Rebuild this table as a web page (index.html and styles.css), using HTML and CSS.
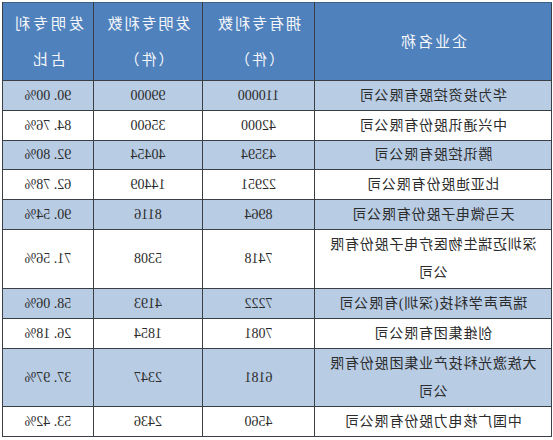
FILE: index.html
```html
<!DOCTYPE html>
<html lang="zh">
<head>
<meta charset="utf-8">
<title>专利统计</title>
<link rel="stylesheet" href="styles.css">
</head>
<body>
<div class="page">
  <table class="patents">
    <colgroup>
      <col class="c-name">
      <col class="c-own">
      <col class="c-inv">
      <col class="c-ratio">
    </colgroup>
    <thead>
      <tr>
        <th class="h-name">企业名称</th>
        <th>拥有专利数<br>（件）</th>
        <th>发明专利数<br>（件）</th>
        <th class="h-ratio">发明专利<br>占比</th>
      </tr>
    </thead>
    <tbody>
      <tr class="alt"><td class="name">华为投资控股有限公司</td><td>110000</td><td>99000</td><td>90. 00%</td></tr>
      <tr><td class="name">中兴通讯股份有限公司</td><td>42000</td><td>35600</td><td>84. 76%</td></tr>
      <tr class="alt r29"><td class="name">腾讯控股有限公司</td><td>43594</td><td>40454</td><td>92. 80%</td></tr>
      <tr><td class="name">比亚迪股份有限公司</td><td>22951</td><td>14409</td><td>62. 78%</td></tr>
      <tr class="alt"><td class="name">天马微电子股份有限公司</td><td>8964</td><td>8116</td><td>90. 54%</td></tr>
      <tr class="tall"><td class="name">深圳迈瑞生物医疗电子股份有限公司</td><td>7418</td><td>5308</td><td>71. 56%</td></tr>
      <tr class="alt"><td class="name">瑞声声学科技(深圳)有限公司</td><td>7222</td><td>4193</td><td>58. 06%</td></tr>
      <tr><td class="name">创维集团有限公司</td><td>7081</td><td>1854</td><td>26. 18%</td></tr>
      <tr class="alt tall2"><td class="name">大族激光科技产业集团股份有限公司</td><td>6181</td><td>2347</td><td>37. 97%</td></tr>
      <tr><td class="name">中国广核电力股份有限公司</td><td>4560</td><td>2436</td><td>53. 42%</td></tr>
    </tbody>
  </table>
</div>
</body>
</html>
```

FILE: styles.css
```css
html, body {
  margin: 0;
  padding: 0;
  background: #ffffff;
}

.page {
  width: 553px;
  height: 440px;
  padding-top: 2px;
  box-sizing: border-box;
  transform: scaleX(-1);
  overflow: hidden;
}

.patents {
  margin-left: 1px;
  width: 549px;
  table-layout: fixed;
  border-collapse: collapse;
  font-family: "Liberation Serif", "Noto Sans CJK SC", serif;
  font-size: 14px;
  color: #2b2b2b;
}

.c-name { width: 237px; }
.c-own { width: 112px; }
.c-inv { width: 109px; }
.c-ratio { width: 91px; }

.patents th,
.patents td {
  border: 1px solid #3a3f46;
  padding: 0 8px;
  text-align: center;
  vertical-align: middle;
}

.patents thead th {
  background: #4f81bd;
  color: #f4f6fa;
  font-weight: normal;
  font-size: 15px;
  letter-spacing: 2px;
  line-height: 36px;
  height: 77px;
  padding: 0;
  border-top-color: #3f5f85;
}

.patents thead th.h-ratio {
  letter-spacing: 3px;
}

.patents tbody td {
  height: 29px;
  line-height: 28px;
}

.patents tbody tr.r29 td {
  height: 28px;
}

.patents tbody tr.tall td {
  height: 58px;
}

.patents tbody tr.tall2 td {
  height: 57px;
}

.patents tbody tr.alt td {
  background: #b8cce4;
}

.patents td.name {
  letter-spacing: 0.8px;
  padding: 0 10px;
}
```
